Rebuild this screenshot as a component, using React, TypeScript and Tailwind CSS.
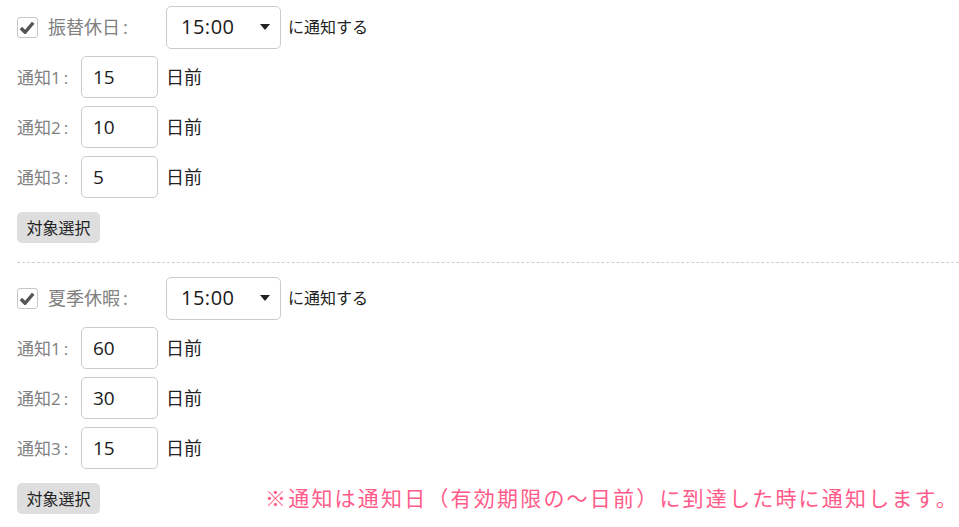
import React from 'react'

const font = { fontFamily: '"Open Sans", "Noto Sans CJK JP", sans-serif' }

interface Holiday {
  name: string
  time: string
  days: string[]
}

const holidays: Holiday[] = [
  { name: '振替休日', time: '15:00', days: ['15', '10', '5'] },
  { name: '夏季休暇', time: '15:00', days: ['60', '30', '15'] },
]

function CheckBox() {
  return (
    <span className="mt-[1px] flex h-[21px] w-[21px] items-center justify-center rounded-[3px] border border-[#c8c8c8] bg-white">
      <svg viewBox="0 0 20 20" className="h-[19px] w-[19px]">
        <path d="M3 10.5 L7.5 15 L16 5" fill="none" stroke="#555555" strokeWidth="3.6" strokeLinejoin="round" />
      </svg>
    </span>
  )
}

function Section({ h, note }: { h: Holiday; note?: boolean }) {
  return (
    <div className="flex flex-col">
      {/* 見出し行 */}
      <div className="flex h-[42px] items-center">
        <CheckBox />
        <span className="ml-[10px] w-[118px] text-[18px] text-[#808080]">
          {h.name}
          <span className="ml-[3px]">:</span>
        </span>
        <div className="flex h-[43px] w-[115px] items-center rounded-[5px] border border-[#cccccc] bg-white pl-[14px] pr-[10px]">
          <span className="flex-1 text-[20px] tracking-[0.5px] text-[#1a1a1a]">{h.time}</span>
          <svg viewBox="0 0 10 6" className="h-[6px] w-[10px]">
            <path d="M0 0 H10 L5 6 Z" fill="#222" />
          </svg>
        </div>
        <span className="ml-[7px] text-[16px] text-[#222]">に通知する</span>
      </div>

      {/* 通知日 */}
      <div className="mt-[8px] flex flex-col gap-[8px]">
        {h.days.map((d, i) => (
          <div key={i} className="flex h-[42px] items-center">
            <span className="w-[64px] text-[17px] text-[#808080]">
              通知{i + 1}
              <span className="ml-[3px]">:</span>
            </span>
            <div className="flex h-[42px] w-[77px] items-center rounded-[5px] border border-[#cccccc] bg-white pl-[11px] text-[19px] text-[#1a1a1a]">
              {d}
            </div>
            <span className="ml-[8px] text-[18px] text-[#222]">日前</span>
          </div>
        ))}
      </div>

      {/* ボタン */}
      <div className="mt-[14px] flex items-center">
        <span className="flex h-[31px] w-[83px] items-center justify-center rounded-[5px] bg-[#dedede] text-[16px] text-[#222]">
          対象選択
        </span>
        {note && (
          <span className="ml-[165px] text-[21px] tracking-[2.2px] text-[#ff5c8a]">
            ※通知は通知日（有効期限の〜日前）に到達した時に通知します。
          </span>
        )}
      </div>
    </div>
  )
}

export default function App() {
  return (
    <div className="h-[527px] w-[959px] overflow-hidden bg-white pl-[17px] pt-[6px] leading-none" style={font}>
      <Section h={holidays[0]} />
      <div className="mt-[19px] border-t border-dashed border-[#cfcfcf]" />
      <div className="mt-[14px]">
        <Section h={holidays[1]} note />
      </div>
    </div>
  )
}
